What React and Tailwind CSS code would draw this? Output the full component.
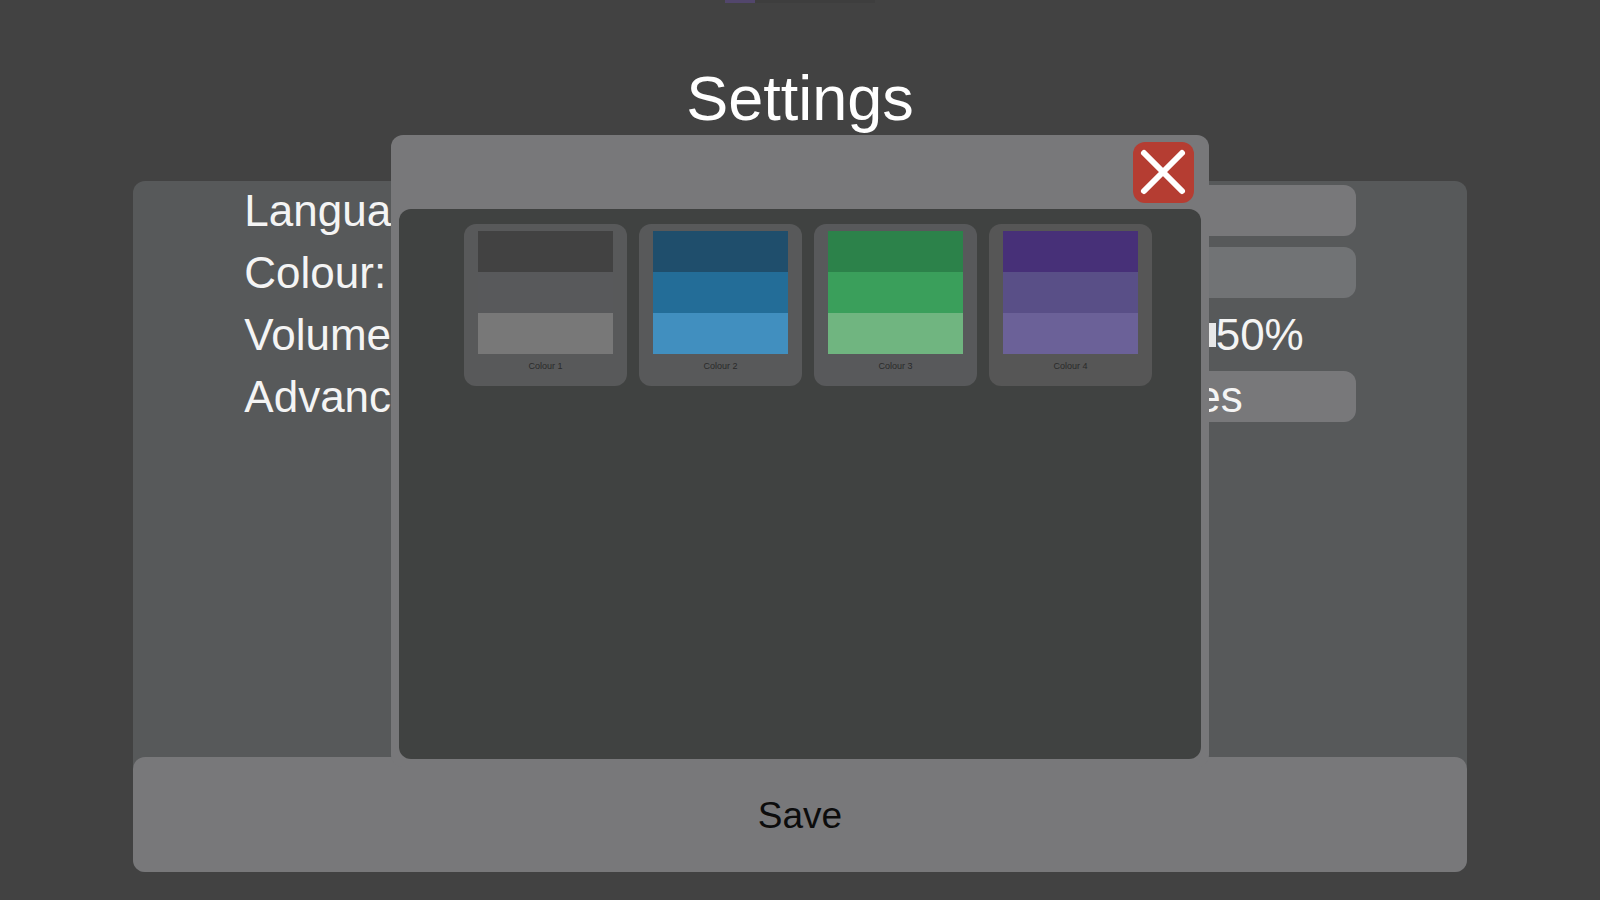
import React, { useState } from "react";

const themes = [
  {
    name: "Colour 1",
    card: "bg-[#58595a]",
    shades: ["bg-[#424242]", "bg-[#58595b]", "bg-[#787878]"],
  },
  {
    name: "Colour 2",
    card: "bg-[#58595a]",
    shades: ["bg-[#1f4e6c]", "bg-[#236d98]", "bg-[#418fbf]"],
  },
  {
    name: "Colour 3",
    card: "bg-[#58595b]",
    shades: ["bg-[#2c824a]", "bg-[#3a9f5b]", "bg-[#70b580]"],
  },
  {
    name: "Colour 4",
    card: "bg-[#565656]",
    shades: ["bg-[#473078]", "bg-[#594f87]", "bg-[#6b6198]"],
  },
];

const SettingRow = ({ label, htmlFor, children }) => (
  <div className="grid grid-cols-[7fr_5fr] items-center h-[51px]">
    <label htmlFor={htmlFor}>{label}</label>
    {children}
  </div>
);

const ColourDialog = ({ onClose, onPick }) => (
  <div className="absolute inset-0 flex justify-center pt-[135px] pb-[133px]">
    <div
      role="dialog"
      aria-label="Colour"
      className="flex flex-col w-[51.1%] bg-[#78787a] rounded-xl px-2 pb-2"
    >
      <div className="flex items-center justify-end h-[74px] px-[7px]">
        <button
          type="button"
          onClick={onClose}
          aria-label="Close"
          className="flex items-center justify-center w-[61px] h-[61px] bg-[#b53d32] rounded-xl"
        >
          <svg
            className="w-[50px] h-[50px]"
            fill="none"
            stroke="white"
            strokeWidth={6}
            strokeLinecap="round"
            viewBox="0 0 50 50"
          >
            <path d="M6 6L44 44M44 6L6 44" />
          </svg>
        </button>
      </div>
      <div className="flex-1 bg-[#404241] rounded-xl pt-[15px] pl-4">
        <div className="flex flex-wrap justify-center gap-3">
          {themes.map((theme) => (
            <button
              key={theme.name}
              type="button"
              onClick={() => onPick(theme.name)}
              className={`flex flex-col w-[163px] h-[162px] rounded-xl px-[14px] pt-[7px] ${theme.card}`}
            >
              {theme.shades.map((shade) => (
                <span key={shade} className={`w-full h-[41px] ${shade}`} />
              ))}
              <span className="w-full text-center text-[9px] leading-6 text-[#2a2a2a]">
                {theme.name}
              </span>
            </button>
          ))}
        </div>
      </div>
    </div>
  </div>
);

const App = () => {
  const [showColours, setShowColours] = useState(true);
  const [colour, setColour] = useState("Colour 1");
  const [volume, setVolume] = useState(50);

  return (
    <div className="relative flex flex-col items-center min-h-screen pb-7 bg-[#424242] font-['Liberation_Sans',Arial,sans-serif]">
      <div className="flex w-[150px] h-[3px] bg-[#3e3e3e]">
        <div className="w-[30px] bg-[#52466c]" />
      </div>
      <h1 className="h-[178px] pt-[59px] text-[63px] leading-[72px] text-white">
        Settings
      </h1>
      <div className="flex flex-col flex-1 w-5/6 bg-[#57595a] rounded-xl">
        <div className="flex flex-col flex-1 gap-[11px] px-[111px] pt-1 text-[44px] leading-[51px] text-[#f4f4f4]">
          <SettingRow label="Language:" htmlFor="language">
            <select
              id="language"
              className="h-full px-6 appearance-none bg-[#78787a] rounded-xl"
            >
              <option>English</option>
            </select>
          </SettingRow>
          <SettingRow label="Colour:" htmlFor="colour">
            <button
              id="colour"
              type="button"
              title={colour}
              onClick={() => setShowColours(true)}
              className="h-full bg-[#717375] rounded-xl"
            >
              Select
            </button>
          </SettingRow>
          <SettingRow label="Volume:" htmlFor="volume">
            <div className="flex items-center">
              <input
                id="volume"
                type="range"
                max="50"
                value={volume}
                onChange={(e) => setVolume(Number(e.target.value))}
                className="flex-1 min-w-0 h-2 appearance-none bg-[#78787a] [&::-webkit-slider-thumb]:appearance-none [&::-webkit-slider-thumb]:w-6 [&::-webkit-slider-thumb]:h-6 [&::-webkit-slider-thumb]:bg-[#e8e8e8]"
              />
              <output htmlFor="volume" className="w-[140px]">
                {volume}%
              </output>
            </div>
          </SettingRow>
          <SettingRow label="Advanced:" htmlFor="advanced">
            <button
              id="advanced"
              type="button"
              className="h-full bg-[#78787a] rounded-xl"
            >
              Preferences
            </button>
          </SettingRow>
        </div>
        <button
          type="button"
          className="h-[115px] pt-[3px] bg-[#78787a] rounded-xl text-[37px] text-[#0c0c0c]"
        >
          Save
        </button>
      </div>
      {showColours && (
        <ColourDialog
          onClose={() => setShowColours(false)}
          onPick={(name) => {
            setColour(name);
            setShowColours(false);
          }}
        />
      )}
    </div>
  );
};

export default App;
